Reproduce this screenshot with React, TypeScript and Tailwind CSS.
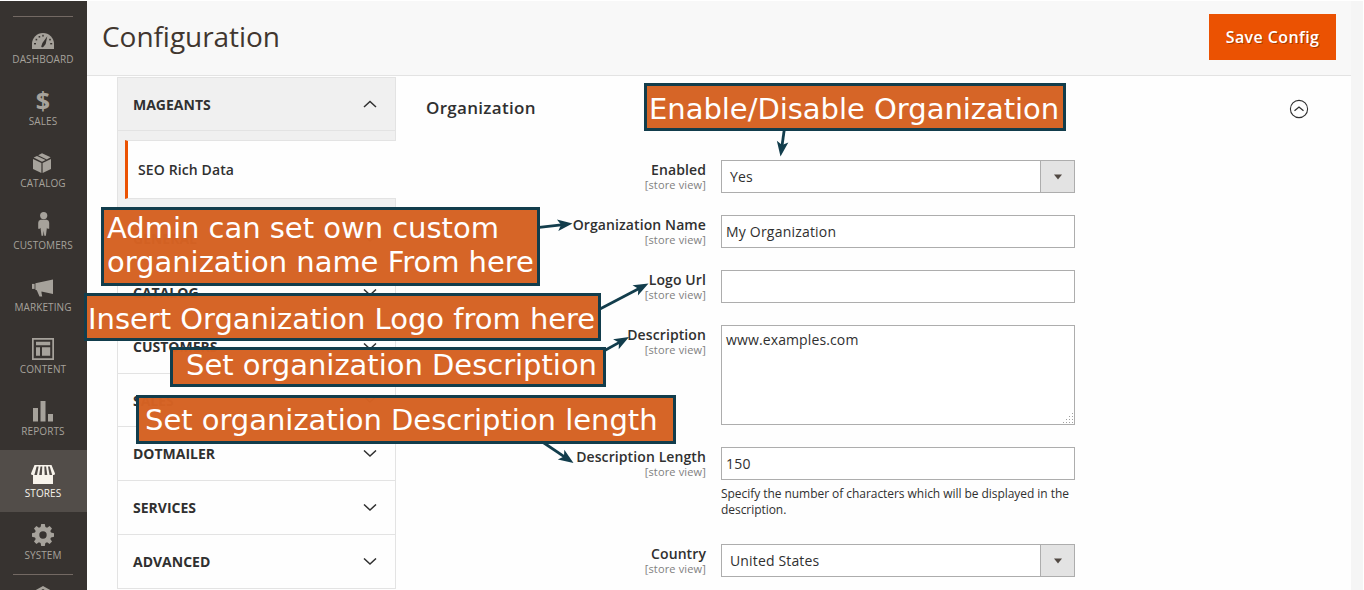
import React from "react";

const menu = [
  {
    label: "DASHBOARD",
    icon: (
      <g>
        <path d="M2 25v-5a11 11 0 0 1 22 0v5z" fill="currentColor" />
        <path d="M11.2 22.5l1.2-3.6 4.9-6.6-1.6 7.6-2.2 2.9a1.5 1.5 0 0 1-2.3-.3z" fill="#373330" />
        <g fill="#373330">
          <rect x="4" y="19" width="2" height="1.4" />
          <rect x="5.6" y="14.8" width="1.6" height="1.6" />
          <rect x="8.6" y="12" width="1.6" height="1.6" />
          <rect x="12.3" y="10.8" width="1.4" height="1.8" />
          <rect x="19.2" y="14.8" width="1.6" height="1.6" />
          <rect x="20.2" y="19" width="2" height="1.4" />
        </g>
      </g>
    ),
  },
  {
    label: "SALES",
    icon: (
      <text x="12.8" y="23.6" textAnchor="middle" fontSize="25" fontWeight="700" fill="currentColor">
        $
      </text>
    ),
  },
  {
    label: "CATALOG",
    icon: (
      <g fill="currentColor">
        <path d="M3 11l8.4 4v10L3 21z" />
        <path d="M21 11l-8.4 4v10l8.4-4z" />
        <path d="M3.6 9.6L7 8l8.600 4-3.600 1.800z" />
        <path d="M8.2 7.3L12 5.3l8.600 4-3.800 2.100z" />
      </g>
    ),
  },
  {
    label: "CUSTOMERS",
    icon: (
      <g fill="currentColor">
        <circle cx="13.7" cy="5.6" r="3.600" />
        <path d="M10.600 9.800h6.200q2.400.4 2.400 3v6h-1.600l-.7-1-1 8h-1.600l-.6-5-.6 5h-1.600l-1-8-.7 1H8.200v-6q0-2.600 2.400-3z" />
      </g>
    ),
  },
  {
    label: "MARKETING",
    icon: (
      <g fill="currentColor">
        <path d="M2 11.900h2.600v5H2z" />
        <path d="M5.400 11.300L23 7.500v14.500l-11.500-2.600v1.400l.7 3.600H9.500L6.800 18.300 5.400 17.700z" />
      </g>
    ),
  },
  {
    label: "CONTENT",
    icon: (
      <g fill="currentColor">
        <path fillRule="evenodd" d="M2 4h22v22H2zM3.700 5.700v18.600h18.600V5.700z" />
        <path d="M6 7.800h14.200v3.400H6zM6 13.200h4v8.600H6zM12 13.200h8.200v8.600H12z" />
      </g>
    ),
  },
  {
    label: "REPORTS",
    icon: <path d="M3 12h5v13.500H3zM10.500 5h5v20.500h-5zM18 18h5v7.500h-5z" fill="currentColor" />,
  },
  {
    label: "STORES",
    active: true,
    icon: (
      <g fill="currentColor">
        <path d="M3 16h20v10H3z" />
        <path d="M4.500 7h17L25 15.500q0 1.500-1.500 1.500h-21Q1 17 1 15.500z" />
        <g fill="#524d49">
          <path d="M6.600 8.500h2L7 17H4.400z" />
          <path d="M10.500 8.500h1.800L11.800 17H9.200z" />
          <path d="M14.300 8.500h1.800L17.300 17h-2.600z" />
          <path d="M18 8.500h1.800L22.200 17h-2.600z" />
        </g>
      </g>
    ),
  },
  {
    label: "SYSTEM",
    icon: (
      <g fill="currentColor">
        <path
          fillRule="evenodd"
          d="M11.200 4h3.600l.6 3 1.700.7 2.500-1.700 2.400 2.400-1.700 2.500.7 1.700 3 .6v3.600l-3 .6-.7 1.700 1.700 2.500-2.400 2.400-2.500-1.700-1.700.7-.6 3h-3.600l-.6-3-1.700-.7-2.500 1.700L4 21.600l1.700-2.500-.7-1.700-3-.6v-3.600l3-.6.7-1.700L4 8.400 6.400 6l2.500 1.700 1.700-.7zM13 11.300a3.700 3.700 0 1 0 0 7.400 3.700 3.700 0 0 0 0-7.400z"
        />
      </g>
    ),
  },
];

const sections = [
  { label: "GENERAL", h: "h-[54px]" },
  { label: "CATALOG", h: "h-[54px]" },
  { label: "CUSTOMERS", h: "h-[54px]" },
  { label: "SALES", h: "h-[53px]" },
  { label: "DOTMAILER", h: "h-[54px]" },
  { label: "SERVICES", h: "h-[54px]" },
  { label: "ADVANCED", h: "h-[54px]" },
];

function Chevron({ up = false }: { up?: boolean }) {
  return (
    <svg width="14" height="8" viewBox="0 0 14 8" fill="none" stroke="#303030" strokeWidth="1.5">
      <path d={up ? "M1 7l6-5.500L13 7" : "M1 .5l6 5.500L13 .5"} />
    </svg>
  );
}

function Field({ label, children }: { label: string; children: React.ReactNode }) {
  return (
    <div className="flex">
      <div className="w-[310px] shrink-0 text-right">
        <div className="mt-[1px] h-[17px] text-[14px] leading-[18px] font-semibold tracking-[0.1px]">{label}</div>
        <div className="text-[11px] leading-[13px] tracking-[0.15px] text-[#808080]">[store view]</div>
      </div>
      <div className="ml-[15px] w-[354px] text-[14px]">{children}</div>
    </div>
  );
}

function Select({ value }: { value: string }) {
  return (
    <div className="flex h-[33px] border border-[#adadad] bg-white">
      <div className="flex-1 pl-2 leading-[31px] tracking-[0.15px]">{value}</div>
      <div className="flex w-[34px] items-center justify-center border-l border-[#adadad] bg-[#e3e3e3]">
        <svg width="8" height="6" viewBox="0 0 8 6">
          <path d="M0 .5h8L4 5.500z" fill="#514943" />
        </svg>
      </div>
    </div>
  );
}

function TextBox({ value }: { value: string }) {
  return (
    <div className="h-[33px] border border-[#adadad] bg-white pl-1 leading-[31px] tracking-[0.2px]">{value}</div>
  );
}

function Callout({ className, children }: { className: string; children: React.ReactNode }) {
  return (
    <div
      className={
        "absolute border-[3px] border-[#123d4c] bg-[#d56223]/98 bg-clip-padding font-['DejaVu_Sans',sans-serif] text-[29px] leading-[34px] tracking-[-0.02px] whitespace-pre text-white " +
        className
      }
    >
      {children}
    </div>
  );
}

function Arrow({ x1, y1, x2, y2 }: { x1: number; y1: number; x2: number; y2: number }) {
  const angle = (Math.atan2(y2 - y1, x2 - x1) * 180) / Math.PI;
  const length = Math.hypot(x2 - x1, y2 - y1);
  return (
    <g transform={`translate(${x2} ${y2}) rotate(${angle})`} fill="#123d4c">
      <rect x={-length} y={-1.4} width={length - 9} height={2.8} />
      <path d="M0 0L-15 5.800L-11.500 0L-15 -5.800z" />
    </g>
  );
}

export default function App() {
  return (
    <div className="relative h-[590px] w-[1364px] overflow-hidden bg-white pt-px font-['Open_Sans',sans-serif] text-[#303030]">
      <div className="flex h-[589px]">
        <nav className="flex w-[87px] shrink-0 flex-col bg-[#373330] pt-[15px]">
          <div className="-mb-px ml-[13px] h-px w-[60px] shrink-0 bg-[#736963]" />
          {menu.map((item) => (
            <div
              key={item.label}
              className={
                "flex h-[62px] shrink-0 flex-col pt-2 " +
                (item.active ? "bg-[#524d49] text-[#f7f3eb]" : "text-[#a6a29b]")
              }
            >
              <svg className="ml-[30px] h-[26px] w-[26px] overflow-visible" viewBox="0 0 26 26">
                {item.icon}
              </svg>
              <div className="mt-[2px] pr-px text-center text-[10px] leading-[14px] tracking-[0.1px]">{item.label}</div>
            </div>
          ))}
          <div className="ml-[13px] h-px w-[60px] shrink-0 bg-[#736963]" />
          <svg className="mt-[11px] ml-[33px] h-[20px] w-[20px] shrink-0 text-[#a6a29b]" viewBox="0 0 20 20">
            <path d="M10 0l9 5v10l-9 5-9-5V5zM10 3L5 6v8l5 3 5-3V6z" fill="currentColor" fillRule="evenodd" />
          </svg>
        </nav>

        <div className="flex w-[1264px] flex-col bg-[#fefefe]">
          <header className="flex h-[75px] shrink-0 items-start justify-between border-b border-[#e3e3e3] bg-[#f8f8f8] pr-[15px] pl-[15px]">
            <h1 className="pt-[16px] text-[28px] leading-[38px] tracking-[-0.05px] text-[#41362f]">Configuration</h1>
            <button className="mt-[13px] h-[46px] w-[127px] bg-[#eb5202] text-[16px] font-semibold tracking-[0.4px] text-white [text-shadow:1px_1px_0_rgba(0,0,0,0.3)]">
              Save Config
            </button>
          </header>

          <div className="flex">
            <aside className="mt-px ml-[30px] w-[279px] shrink-0">
              <div className="h-[135px] border border-b-0 border-[#e3e3e3] bg-[#f0f0f0]">
                <div className="flex h-[53px] items-center justify-between border-b border-[#e3e3e3] pr-[18px] pl-[15px]">
                  <span className="text-[14px] font-bold">MAGEANTS</span>
                  <Chevron up />
                </div>
                <div className="mt-[9px] -mr-px ml-[7px] flex h-[59px] items-center border-y border-l-[3px] border-y-[#e3e3e3] border-l-[#eb5202] bg-[#fefefe] pl-[10px] text-[14px] font-semibold tracking-[0.12px]">
                  SEO Rich Data
                </div>
              </div>
              {sections.map((s) => (
                <div
                  key={s.label}
                  className={"flex items-center justify-between border-x border-b border-[#e3e3e3] pr-[18px] pl-[15px] " + s.h}
                >
                  <span className="text-[14px] font-bold">{s.label}</span>
                  <Chevron />
                </div>
              ))}
            </aside>

            <main className="flex-1">
              <div className="flex h-[84px] items-start justify-between pr-[42px] pl-[30px]">
                <h2 className="pt-[20px] text-[17px] leading-[24px] font-semibold tracking-[0.3px]">Organization</h2>
                <svg className="mt-[23px]" width="20" height="20" viewBox="0 0 20 20" fill="none" stroke="#303030">
                  <circle cx="10" cy="10" r="8.600" strokeWidth="1.100" />
                  <path d="M5.500 11.800L10 8l4.500 3.800" strokeWidth="1.300" />
                </svg>
              </div>
              <div className="flex flex-col gap-[22px]">
                <Field label="Enabled">
                  <Select value="Yes" />
                </Field>
                <Field label="Organization Name">
                  <TextBox value="My Organization" />
                </Field>
                <Field label="Logo Url">
                  <TextBox value="" />
                </Field>
                <Field label="Description">
                  <div className="relative h-[100px] border border-[#adadad] bg-white pt-[4px] pl-1 leading-[20px] tracking-[0.12px]">
                    www.examples.com
                    <svg className="absolute right-0 bottom-0" width="11" height="11" viewBox="0 0 11 11" fill="#a0a0a0">
                      <path d="M9 0h1v1H9zM9 3h1v1H9zM6 3h1v1H6zM9 6h1v1H9zM6 6h1v1H6zM3 6h1v1H3zM9 9h1v1H9zM6 9h1v1H6zM3 9h1v1H3zM0 9h1v1H0z" />
                    </svg>
                  </div>
                </Field>
                <div className="h-[75px]">
                  <Field label="Description Length">
                    <TextBox value="150" />
                    <p className="mt-[6px] text-[12px] leading-[16px] tracking-[-0.05px]">
                      Specify the number of characters which will be displayed in the description.
                    </p>
                  </Field>
                </div>
                <Field label="Country">
                  <Select value="United States" />
                </Field>
              </div>
            </main>
          </div>
        </div>
        <div className="w-[12px] bg-[#f5f5f5]" />
      </div>

      <svg className="absolute inset-0" width="1364" height="590" viewBox="0 0 1364 590">
        <Arrow x1={784.500} y1={128} x2={780.500} y2={156.500} />
        <Arrow x1={537} y1={227.700} x2={572.500} y2={223.500} />
        <Arrow x1={598} y1={310} x2={648.500} y2={283.500} />
        <Arrow x1={602} y1={352} x2={629} y2={337} />
        <Arrow x1={541} y1={441} x2={573.500} y2={463} />
      </svg>

      <Callout className="top-[83px] left-[644px] h-[48px] w-[422px] pt-[6px] pl-[2px]">Enable/Disable Organization</Callout>
      <Callout className="top-[207px] left-[101px] h-[79px] w-[439px] pt-[1px] pl-[3px]">
        {"Admin can set own custom\norganization name From here"}
      </Callout>
      <Callout className="top-[293px] left-[84px] h-[48px] w-[517px] pt-[6px] pl-[1px]">
        Insert Organization Logo from here
      </Callout>
      <Callout className="top-[347px] left-[170px] h-[40px] w-[436px] pl-[13px]">
        <div className="-mt-[2px]">Set organization Description</div>
      </Callout>
      <Callout className="top-[395px] left-[136px] h-[49px] w-[540px] pt-[5px] pl-[6px]">
        Set organization Description length
      </Callout>
    </div>
  );
}
